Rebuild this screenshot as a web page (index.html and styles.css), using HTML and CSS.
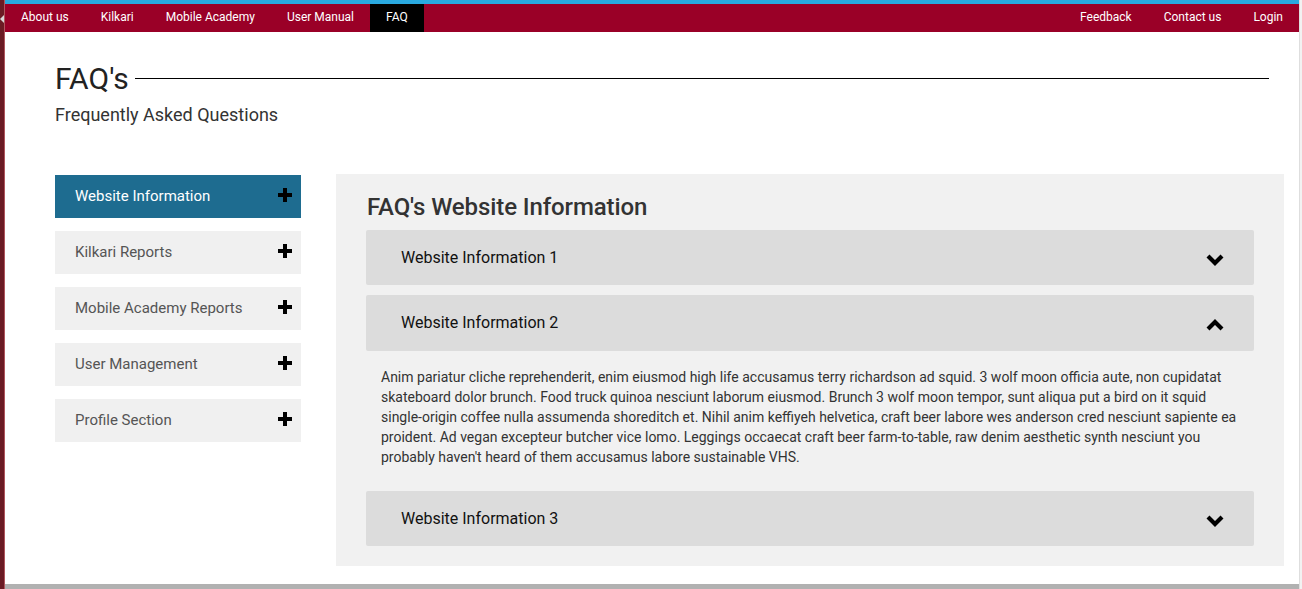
FILE: index.html
```html
<!DOCTYPE html>
<html>
<head>
<meta charset="utf-8">
<title>FAQ's</title>
<link rel="stylesheet" href="styles.css">
</head>
<body>
<div class="shell">
  <div class="leftbar"><span class="tri"></span></div>
  <div class="page">
    <div class="stripe"></div>
    <nav class="nav">
      <ul class="nav-left">
        <li><a href="#">About us</a></li>
        <li><a href="#">Kilkari</a></li>
        <li><a href="#">Mobile Academy</a></li>
        <li><a href="#">User Manual</a></li>
        <li class="active"><a href="#">FAQ</a></li>
      </ul>
      <ul class="nav-right">
        <li><a href="#">Feedback</a></li>
        <li><a href="#">Contact us</a></li>
        <li><a href="#">Login</a></li>
      </ul>
    </nav>
    <main class="content">
      <div class="head">
        <h1 class="title"><span>FAQ's</span><span class="rule"></span></h1>
        <p class="subtitle">Frequently Asked Questions</p>
      </div>
      <div class="body">
        <ul class="side">
          <li class="side-item active"><span>Website Information</span><span class="plus"></span></li>
          <li class="side-item"><span>Kilkari Reports</span><span class="plus"></span></li>
          <li class="side-item"><span>Mobile Academy Reports</span><span class="plus"></span></li>
          <li class="side-item"><span>User Management</span><span class="plus"></span></li>
          <li class="side-item"><span>Profile Section</span><span class="plus"></span></li>
        </ul>
        <section class="panel">
          <h2 class="panel-title">FAQ's Website Information</h2>
          <div class="acc">
            <div class="acc-head"><span>Website Information 1</span>
              <svg class="chev" viewBox="0 0 20 13" width="20" height="13"><polyline points="3,3 10,10 17,3" fill="none" stroke="#000" stroke-width="4.2" stroke-linejoin="miter"/></svg>
            </div>
          </div>
          <div class="acc open">
            <div class="acc-head"><span>Website Information 2</span>
              <svg class="chev up" viewBox="0 0 20 13" width="20" height="13"><polyline points="3,10 10,3 17,10" fill="none" stroke="#000" stroke-width="4.2" stroke-linejoin="miter"/></svg>
            </div>
            <p class="acc-body">Anim pariatur cliche reprehenderit, enim eiusmod high life accusamus terry richardson ad squid. 3 wolf moon officia aute, non cupidatat skateboard dolor brunch. Food truck quinoa nesciunt laborum eiusmod. Brunch 3 wolf moon tempor, sunt aliqua put a bird on it squid single-origin coffee nulla assumenda shoreditch et. Nihil anim keffiyeh helvetica, craft beer labore wes anderson cred nesciunt sapiente ea proident. Ad vegan excepteur butcher vice lomo. Leggings occaecat craft beer farm-to-table, raw denim aesthetic synth nesciunt you probably haven't heard of them accusamus labore sustainable VHS.</p>
          </div>
          <div class="acc">
            <div class="acc-head"><span>Website Information 3</span>
              <svg class="chev" viewBox="0 0 20 13" width="20" height="13"><polyline points="3,3 10,10 17,3" fill="none" stroke="#000" stroke-width="4.2" stroke-linejoin="miter"/></svg>
            </div>
          </div>
        </section>
      </div>
    </main>
    <div class="bottom-bar"></div>
  </div>
  <div class="rightbar"></div>
</div>
</body>
</html>
```
FILE: styles.css
```css
* { box-sizing: border-box; }
html, body { margin: 0; padding: 0; }
body {
  font-family: Roboto, "Liberation Sans", Arial, sans-serif;
  background: #fff;
  overflow: hidden;
}
.shell {
  display: flex;
  width: 1302px;
  height: 589px;
}
.leftbar {
  width: 5px;
  background: #6b1b24;
  border-right: 1px solid #b0555d;
  position: relative;
  flex: none;
}
.tri {
  position: absolute;
  left: 0;
  top: 15px;
  width: 0;
  height: 0;
  border-top: 4px solid transparent;
  border-bottom: 4px solid transparent;
  border-right: 4px solid #d8d8d8;
}
.page {
  flex: 1;
  display: flex;
  flex-direction: column;
  min-width: 0;
}
.rightbar {
  width: 3px;
  flex: none;
  background: #f2f2f2;
  border-left: 1px solid #dedede;
}
.stripe {
  height: 4px;
  background: #29a9df;
}
.nav {
  height: 28px;
  background: #9a0027;
  display: flex;
  justify-content: space-between;
}
.nav ul {
  list-style: none;
  margin: 0;
  padding: 0;
  display: flex;
}
.nav li a {
  display: block;
  height: 28px;
  line-height: 26px;
  padding: 0 16px;
  color: #fff;
  font-size: 12px;
  text-decoration: none;
}
.nav li.active a { background: #000; }
.content {
  flex: 1;
  padding: 29px 0 0 50px;
}
.head { padding-right: 30px; }
.title {
  margin: 0;
  display: flex;
  align-items: center;
  font-size: 30px;
  line-height: 36px;
  font-weight: 400;
  color: #222;
}
.rule {
  flex: 1;
  height: 1px;
  background: #000;
  margin-left: 6px;
  margin-top: -2px;
}
.subtitle {
  margin: 6px 0 0;
  font-size: 18px;
  line-height: 24px;
  color: #333;
}
.body {
  display: flex;
  align-items: flex-start;
  margin-top: 47px;
  gap: 35px;
}
.side {
  list-style: none;
  margin: 1px 0 0;
  padding: 0;
  width: 246px;
  display: flex;
  flex-direction: column;
  gap: 13px;
}
.side-item {
  height: 43px;
  background: #f0f0f0;
  color: #555;
  font-size: 15px;
  display: flex;
  align-items: center;
  justify-content: space-between;
  padding: 0 9px 2px 20px;
}
.side-item.active {
  background: #1e6c90;
  color: #fff;
}
.plus {
  position: relative;
  width: 14px;
  height: 14px;
  margin-top: -1px;
}
.plus::before, .plus::after {
  content: "";
  position: absolute;
  background: #000;
}
.plus::before { left: 0; right: 0; top: 5px; height: 4px; }
.plus::after { top: 0; bottom: 0; left: 5px; width: 4px; }
.panel {
  width: 948px;
  background: #f1f1f1;
  padding: 19px 30px 20px;
}
.panel-title {
  margin: 0 0 9px 1px;
  font-size: 24px;
  line-height: 28px;
  font-weight: 500;
  color: #333;
  letter-spacing: -0.1px;
}
.acc + .acc { margin-top: 10px; }
.acc-head {
  height: 55px;
  background: #dcdcdc;
  border-radius: 2px;
  display: flex;
  align-items: center;
  justify-content: space-between;
  padding: 0 29px 0 35px;
  font-size: 16px;
  color: #111;
}
.open .acc-head { height: 56px; padding-bottom: 2px; }
.chev { display: block; margin-top: 3px; }
.chev.up { margin-top: 6px; }
.acc-body {
  margin: 0;
  padding: 16px 8px 14px 15px;
  font-size: 14px;
  line-height: 20px;
  color: #333;
}
.bottom-bar {
  height: 5px;
  background: #b1b1b1;
}
```
